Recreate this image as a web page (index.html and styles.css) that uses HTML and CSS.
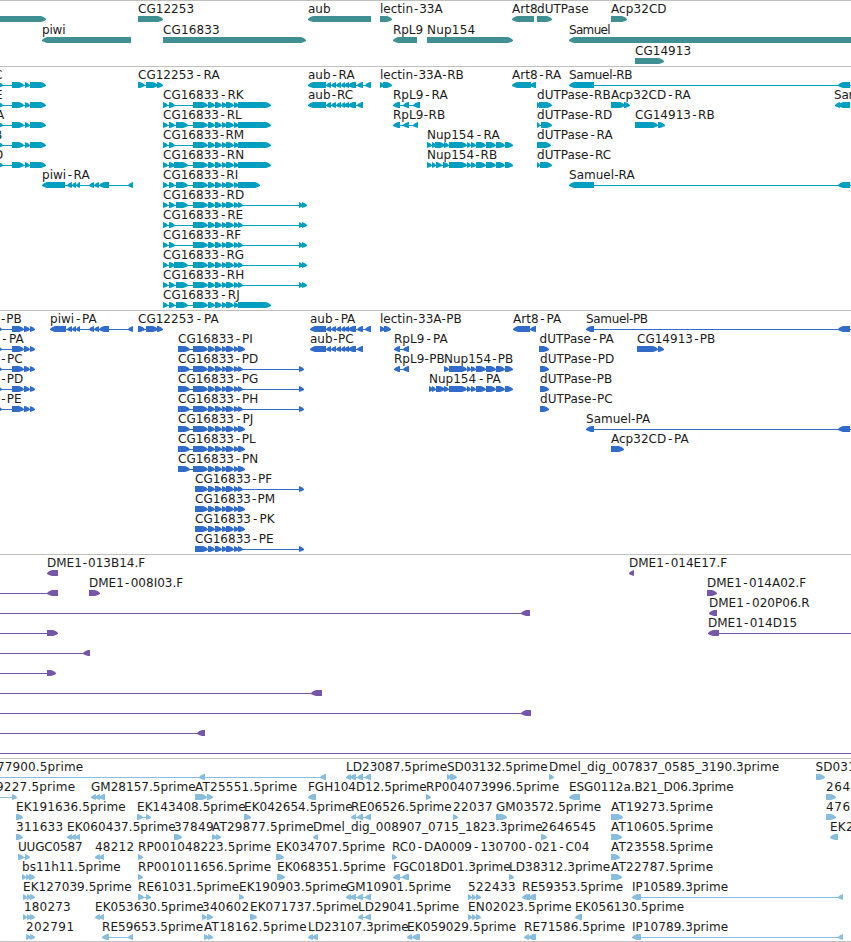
FILE: index.html
```
<!DOCTYPE html>
<html lang="en">
<head>
  <meta charset="UTF-8" />
  <title>Genome browser</title>
  <link rel="stylesheet" href="styles.css">
</head>
<body>
  <main id="browser">
    <section class="track genes" id="genes"></section>
    <section class="track transcripts" id="transcripts"></section>
    <section class="track proteins" id="proteins"></section>
    <section class="track bacs" id="bacs"></section>
    <section class="track ests" id="ests"></section>
  </main>
  <script src="tracks.js"></script>
</body>
</html>
```
FILE: styles.css
```
* {
  margin: 0;
  padding: 0;
  box-sizing: border-box;
}
body {
  background: #fff;
  color: #000;
  font-family: "DejaVu Sans", "Liberation Sans", sans-serif;
  font-size: 12px;
  overflow: hidden;
}
#browser {
  width: 851px;
  border-bottom: 1px solid #c0c0c0;
}

/* one band per track, rows are stacked inside */
.track {
  display: flex;
  flex-direction: column;
  border-top: 1px solid #c0c0c0;
  padding: 2px 0 1px;
}
.row {
  display: block;
  width: 100%;
  height: 20px;
}
.row text {
  fill: #1a1a1a;
}
.row path {
  fill: currentColor;
}

/* track colours */
.genes {
  color: #3f8f93;
  padding-bottom: 0;
}
.genes .row {
  height: 21px;
}
.transcripts {
  color: #009fc0;
}
.proteins {
  color: #316ccb;
}
.bacs {
  color: #7556a8;
}
.ests {
  color: #88bddd;
  padding-bottom: 0;
}
```
FILE: tracks.js
```
// exons shared by all CG16833 isoforms
const mid = "208:215 215:222 222:227 226:234 234:239";
const core = "193:208 " + mid;
const farEnd = " 238:243 299:303 302:307";
const aubTail = " 326:331 331:336 336:341 341:345 344:349 348:356 357:363";
const nupTail = " 449:467 467:471 471:476 476:486 486:496 496:505 505:513";
const piwiTail = " 67:72 72:76 76:80 89:94 94:99 99:109 128:133";
const left = "-9:3 12:24 25:30 30:46";
const leftP = "-9:2 12:24 24:30 30:35";

// feature: [label, label start, label end, strand, blocks]
const tracks = {
  genes: [
    [
      ["", 0, 0, ">", "-20:46"],
      ["CG12253", 138, 193.5, ">", "138:163"],
      ["aub", 308, 330, "<", "308:371"],
      ["lectin-33A", 380, 442, ">", "380:392"],
      ["Art8", 512, 537, "<", "512:534"],
      ["dUTPase", 537, 588, ">", "537:552"],
      ["Acp32CD", 611, 666, ">", "611:627"]
    ],
    [
      ["piwi", 42, 65, "<", "42:131"],
      ["CG16833", 163, 219, ">", "163:306"],
      ["RpL9", 393, 422.5, "<", "393:417"],
      ["Nup154", 427, 474.5, ">", "427:513"],
      ["Samuel", 569, 610, "<", "569:860"]
    ],
    [
      ["CG14913", 635, 690.5, ">", "635:664"]
    ]
  ],
  transcripts: [
    [
      ["C", -6, 2, ">", left],
      ["CG12253-RA", 138, 219, ">", "138:145 146:158 157:163"],
      ["aub-RA", 308, 354, "<", "308:326" + aubTail + " 365:371"],
      ["lectin-33A-RB", 380, 463, ">", "380:384 383:392"],
      ["Art8-RA", 512, 560.5, "<", "512:531 530:536"],
      ["Samuel-RB", 569, 632, "<", "569:594 838:850 860:870"]
    ],
    [
      ["E", -5, 2, ">", left],
      ["CG16833-RK", 163, 243, ">", "163:168 169:175 " + core + " 238:271"],
      ["aub-RC", 308, 352.5, "<", "308:326" + aubTail],
      ["RpL9-RA", 393, 447, "<", "393:400 403:409 413:420"],
      ["dUTPase-RB", 537, 610, ">", "537:540 539:552"],
      ["Acp32CD-RA", 611, 690, ">", "611:625 624:630"],
      ["Samuel-RC", 834, 897, "<", "835:840 838:850"]
    ],
    [
      ["A", -4, 4, ">", left],
      ["CG16833-RL", 163, 241, ">", "163:168 169:175 176:188 " + core + " 238:271"],
      ["RpL9-RB", 393, 444.5, "<", "393:400 403:409 413:418"],
      ["dUTPase-RD", 537, 611.5, ">", "537:540 541:552"],
      ["CG14913-RB", 635, 714, ">", "635:658 658:665"]
    ],
    [
      ["B", -6, 1, ">", left],
      ["CG16833-RM", 163, 243.5, ">", "163:168 169:175 " + core + " 238:271"],
      ["Nup154-RA", 427, 499, ">", "427:432 432:436 435:445 444:449" + nupTail],
      ["dUTPase-RA", 537, 612, ">", "537:551"]
    ],
    [
      ["D", -6, 3, ">", left],
      ["CG16833-RN", 163, 243.5, ">", "163:168 169:175 174:188 " + core + " 238:271"],
      ["Nup154-RB", 427, 496.5, ">", "427:432 432:436 436:442 443:449" + nupTail],
      ["dUTPase-RC", 537, 610.5, ">", "537:540 540:552"]
    ],
    [
      ["piwi-RA", 42, 89, "<", "42:65" + piwiTail],
      ["CG16833-RI", 163, 237.5, ">", "163:168 169:175 176:188 " + core + " 238:260"],
      ["Samuel-RA", 569, 634, "<", "569:594 838:850 860:870"]
    ],
    [["CG16833-RD", 163, 243.5, ">", "163:168 169:175 176:188 " + core + farEnd]],
    [["CG16833-RE", 163, 242.5, ">", "163:168 169:175 " + core + farEnd]],
    [["CG16833-RF", 163, 240.5, ">", "163:168 169:175 " + core + farEnd]],
    [["CG16833-RG", 163, 243.5, ">", "163:168 169:175 174:188 " + core + farEnd]],
    [["CG16833-RH", 163, 243.5, ">", "163:168 169:175 176:188 " + core + farEnd]],
    [["CG16833-RJ", 163, 239, ">", "163:168 169:175 176:188 " + core + " 238:271"]]
  ],
  proteins: [
    [
      ["-PB", 0, 21, ">", leftP],
      ["piwi-PA", 50, 96, "<", "50:66" + piwiTail],
      ["CG12253-PA", 138, 218, ">", "138:145 146:158 157:163"],
      ["aub-PA", 310, 354.7, "<", "310:326" + aubTail + " 365:371"],
      ["lectin-33A-PB", 380, 461, ">", "380:385 384:391"],
      ["Art8-PA", 513, 560.5, "<", "513:530 530:536"],
      ["Samuel-PB", 586, 647.5, "<", "586:594 838:850 860:870"]
    ],
    [
      ["-PA", 0, 23, ">", leftP],
      ["CG16833-PI", 178, 252, ">", "178:190 " + core + " 238:245"],
      ["aub-PC", 310, 353, "<", "310:326" + aubTail],
      ["RpL9-PA", 394, 447, "<", "394:400 403:409"],
      ["dUTPase-PA", 539.5, 613, ">", "539:549"],
      ["CG14913-PB", 637, 714.5, ">", "637:658 658:664"]
    ],
    [
      ["-PC", 0, 22, ">", leftP],
      ["CG16833-PD", 178, 257.5, ">", "178:190 " + core + " 238:243 299:304"],
      ["RpL9-PB", 394, 444, "<", "394:400 403:409"],
      ["Nup154-PB", 444, 512.5, ">", "444:449" + nupTail],
      ["dUTPase-PD", 540, 613.5, ">", "540:549"]
    ],
    [
      ["-PD", 0, 22.5, ">", leftP],
      ["CG16833-PG", 178, 257.5, ">", "178:190 " + core + " 238:243 299:304"],
      ["Nup154-PA", 429, 500, ">", "429:433 432:436 436:445 444:449" + nupTail],
      ["dUTPase-PB", 540, 611.5, ">", "540:549"]
    ],
    [
      ["-PE", 0, 21, ">", leftP],
      ["CG16833-PH", 178, 257.5, ">", "178:190 " + core + " 238:243 299:304"],
      ["dUTPase-PC", 540, 612, ">", "540:549"]
    ],
    [
      ["CG16833-PJ", 178, 252.5, ">", "178:190 " + core + " 238:245"],
      ["Samuel-PA", 586, 649.5, "<", "586:594 838:850 860:870"]
    ],
    [
      ["CG16833-PL", 178, 255, ">", "178:190 " + core + " 238:245"],
      ["Acp32CD-PA", 611, 688, ">", "611:624"]
    ],
    [["CG16833-PN", 178, 257.5, ">", "178:190 " + core + " 238:245"]],
    [["CG16833-PF", 195, 271.5, ">", "195:208 " + mid + " 238:243 299:304"]],
    [["CG16833-PM", 195, 274.5, ">", "195:208 " + mid + " 238:245"]],
    [["CG16833-PK", 195, 274, ">", "195:208 " + mid + " 238:245"]],
    [["CG16833-PE", 195, 273, ">", "195:208 " + mid + " 238:243 299:304"]]
  ],
  bacs: [
    [
      ["DME1-013B14.F", 47, 144.5, "<", "47:58"],
      ["DME1-014E17.F", 629, 726.5, "<", "629:634"]
    ],
    [
      ["", 0, 0, "<", "-20:-10 47:58"],
      ["DME1-008I03.F", 89, 182.5, ">", "89:100"],
      ["DME1-014A02.F", 707, 805.5, ">", "707:717"]
    ],
    [
      ["", 0, 0, "<", "-20:-10 521:530"],
      ["DME1-020P06.R", 709, 809, "<", "709:717"]
    ],
    [
      ["", 0, 0, ">", "-20:-10 47:58"],
      ["DME1-014D15", 708, 796.5, "<", "708:719 860:870"]
    ],
    [["", 0, 0, "<", "-20:-10 83:90"]],
    [["", 0, 0, ">", "-20:-10 47:56"]],
    [["", 0, 0, "<", "-20:-10 311:322"]],
    [["", 0, 0, "<", "-20:-10 521:531"]],
    [["", 0, 0, "<", "-20:-10 197:205"]],
    [["", 0, 0, "<", "-20:-10 860:870"]]
  ],
  ests: [
    [
      ["77900.5prime", -3, 82.5, "<", "-20:-10 199:205 320:326"],
      ["LD23087.5prime", 346, 446.5, "<", "346:351 350:356 357:363 365:371"],
      ["SD03132.5prime", 447, 547, ">", "447:451 450:457"],
      ["Dmel_dig_007837_0585_3190.3prime", 549, 778.5, ">", "549:554"],
      ["SD031", 815.5, 855, ">", "816:825"]
    ],
    [
      ["9227.5prime", -4, 74.5, ">", "-20:-10 12:17"],
      ["GM28157.5prime", 91, 195, "<", "91:96 95:100 99:105"],
      ["AT25551.5prime", 195, 296.5, ">", "195:207 207:213"],
      ["FGH104D12.5prime", 308, 426, "<", "308:316"],
      ["RP004073996.5prime", 426, 558.5, ">", "426:431"],
      ["ESG0112a.B21_D06.3prime", 569, 733, "<", "569:580"],
      ["264", 826, 849.5, ">", "826:836"]
    ],
    [
      ["EK191636.5prime", 16, 125, ">", "16:23"],
      ["EK143408.5prime", 137, 245, ">", "137:143 146:151"],
      ["EK042654.5prime", 244, 352, ">", "244:251"],
      ["RE06526.5prime", 351, 451, "<", "351:356 357:363 365:371"],
      ["22037", 453, 492, ">", "453:458"],
      ["GM03572.5prime", 496, 600.5, ">", "496:507"],
      ["AT19273.5prime", 611, 712.5, ">", "611:623"],
      ["476", 826, 849.5, ">", "826:836"]
    ],
    [
      ["311633", 16, 62.5, ">", "16:23"],
      ["EK060437.5prime", 67, 175, "<", "67:72 71:76 75:80"],
      ["37849", 174, 213, ">", "174:182"],
      ["AT29877.5prime", 212, 313, ">", "212:217 216:221"],
      ["Dmel_dig_008907_0715_1823.3prime", 313, 542, "<", "313:318"],
      ["2646545", 541, 595.5, ">", "541:547"],
      ["AT10605.5prime", 611, 712.5, ">", "611:622"],
      ["EK2", 830, 853, "<", "830:838"]
    ],
    [
      ["UUGC0587", 18, 82, ">", "18:24 25:30"],
      ["48212", 95, 133.5, "<", "95:100 99:104"],
      ["RP001048223.5prime", 138, 270.5, ">", "138:143"],
      ["EK034707.5prime", 276, 384.5, ">", "276:284"],
      ["RC0-DA0009-130700-021-C04", 392, 588.5, ">", "392:397"],
      ["AT23558.5prime", 611, 712.5, ">", "611:620"]
    ],
    [
      ["bs11h11.5prime", 22, 120, ">", "22:26 26:30 29:35"],
      ["RP001011656.5prime", 138, 270.5, ">", "138:143"],
      ["EK068351.5prime", 277, 385, ">", "277:285"],
      ["FGC018D01.3prime", 393, 510, "<", "393:400 402:409"],
      ["LD38312.3prime", 509, 609.5, ">", "509:514"],
      ["AT22787.5prime", 611, 712.5, ">", "611:622"]
    ],
    [
      ["EK127039.5prime", 23, 131, ">", "23:27 27:31 30:35"],
      ["RE61031.5prime", 138, 238.5, ">", "138:144 146:151"],
      ["EK190903.5prime", 239, 347, ">", "239:244"],
      ["GM10901.5prime", 346, 450.5, "<", "346:351 350:356 357:363 365:371"],
      ["522433", 468, 515, ">", "468:472 472:476 476:481"],
      ["RE59353.5prime", 522, 622.5, "<", "522:530 529:536"],
      ["IP10589.3prime", 632, 727.5, "<", "632:641 838:843"]
    ],
    [
      ["180273", 24, 70, ">", "23:27 27:31 30:35"],
      ["EK053630.5prime", 95, 203, "<", "95:100 99:104"],
      ["340602", 202, 248.5, ">", "202:207 207:213"],
      ["EK071737.5prime", 250, 358, ">", "250:257"],
      ["LD29041.5prime", 358, 458.5, "<", "358:363 365:371"],
      ["EN02023.5prime", 468, 571, ">", "468:472 472:476 476:481"],
      ["EK056130.5prime", 575, 683.5, "<", "575:582"]
    ],
    [
      ["202791", 26, 73.5, ">", "26:31 30:35"],
      ["RE59653.5prime", 102, 202.5, "<", "102:109 128:133"],
      ["AT18162.5prime", 204, 306, ">", "204:209 208:213"],
      ["LD23107.3prime", 308, 408, "<", "308:313 312:318"],
      ["EK059029.5prime", 407, 515.5, "<", "407:412 412:420"],
      ["RE71586.5prime", 524, 624.5, "<", "524:529 528:536"],
      ["IP10789.3prime", 632, 727.5, "<", "632:641 838:843"]
    ]
  ]
};

const NS = "http://www.w3.org/2000/svg";

// block with a pointed end on the strand side
function arrow(a, b, strand) {
  const head = Math.min(5, b - a);
  const tip = strand === ">" ? b : a;
  const tail = strand === ">" ? a : b;
  const s = strand === ">" ? -1 : 1;
  return `M${tail} 13H${tip + s * head}L${tip + s * head * 0.4} 14.3L${tip} 16` +
    `V17L${tip + s * head * 0.4} 18L${tip + s * head} 19H${tail}Z`;
}

// spare width goes round the hyphens, otherwise between all letters
function fitLabel(text, label, width) {
  const spare = width - text.getComputedTextLength();
  const hyphens = label.split("-").length - 1;
  if (hyphens === 0 || spare < 0) {
    text.setAttribute("textLength", width);
    return;
  }
  const gap = spare / (hyphens * 2);
  const dx = [...label].map((c, i) => {
    if (c === "-") return gap;
    return label[i - 1] === "-" ? gap : 0;
  });
  text.setAttribute("dx", dx.join(" "));
}

function drawFeature(svg, [label, x, end, strand, blocks]) {
  const spans = blocks.split(" ").map(b => b.split(":").map(Number));
  const from = spans[0][0];
  const to = spans[spans.length - 1][1];

  const line = document.createElementNS(NS, "path");
  line.setAttribute("d", `M${from} 16H${to}V17H${from}Z`);
  svg.appendChild(line);

  spans.forEach(([a, b]) => {
    const block = document.createElementNS(NS, "path");
    block.setAttribute("d", arrow(a, b, strand));
    svg.appendChild(block);
  });

  if (label) {
    const text = document.createElementNS(NS, "text");
    text.setAttribute("x", x);
    text.setAttribute("y", 10);
    text.textContent = label;
    svg.appendChild(text);
    fitLabel(text, label, end - x + 0.6);
  }
}

Object.keys(tracks).forEach(id => {
  const track = document.getElementById(id);
  tracks[id].forEach(features => {
    const svg = document.createElementNS(NS, "svg");
    svg.setAttribute("class", "row");
    track.appendChild(svg);
    features.forEach(f => drawFeature(svg, f));
  });
});
```
